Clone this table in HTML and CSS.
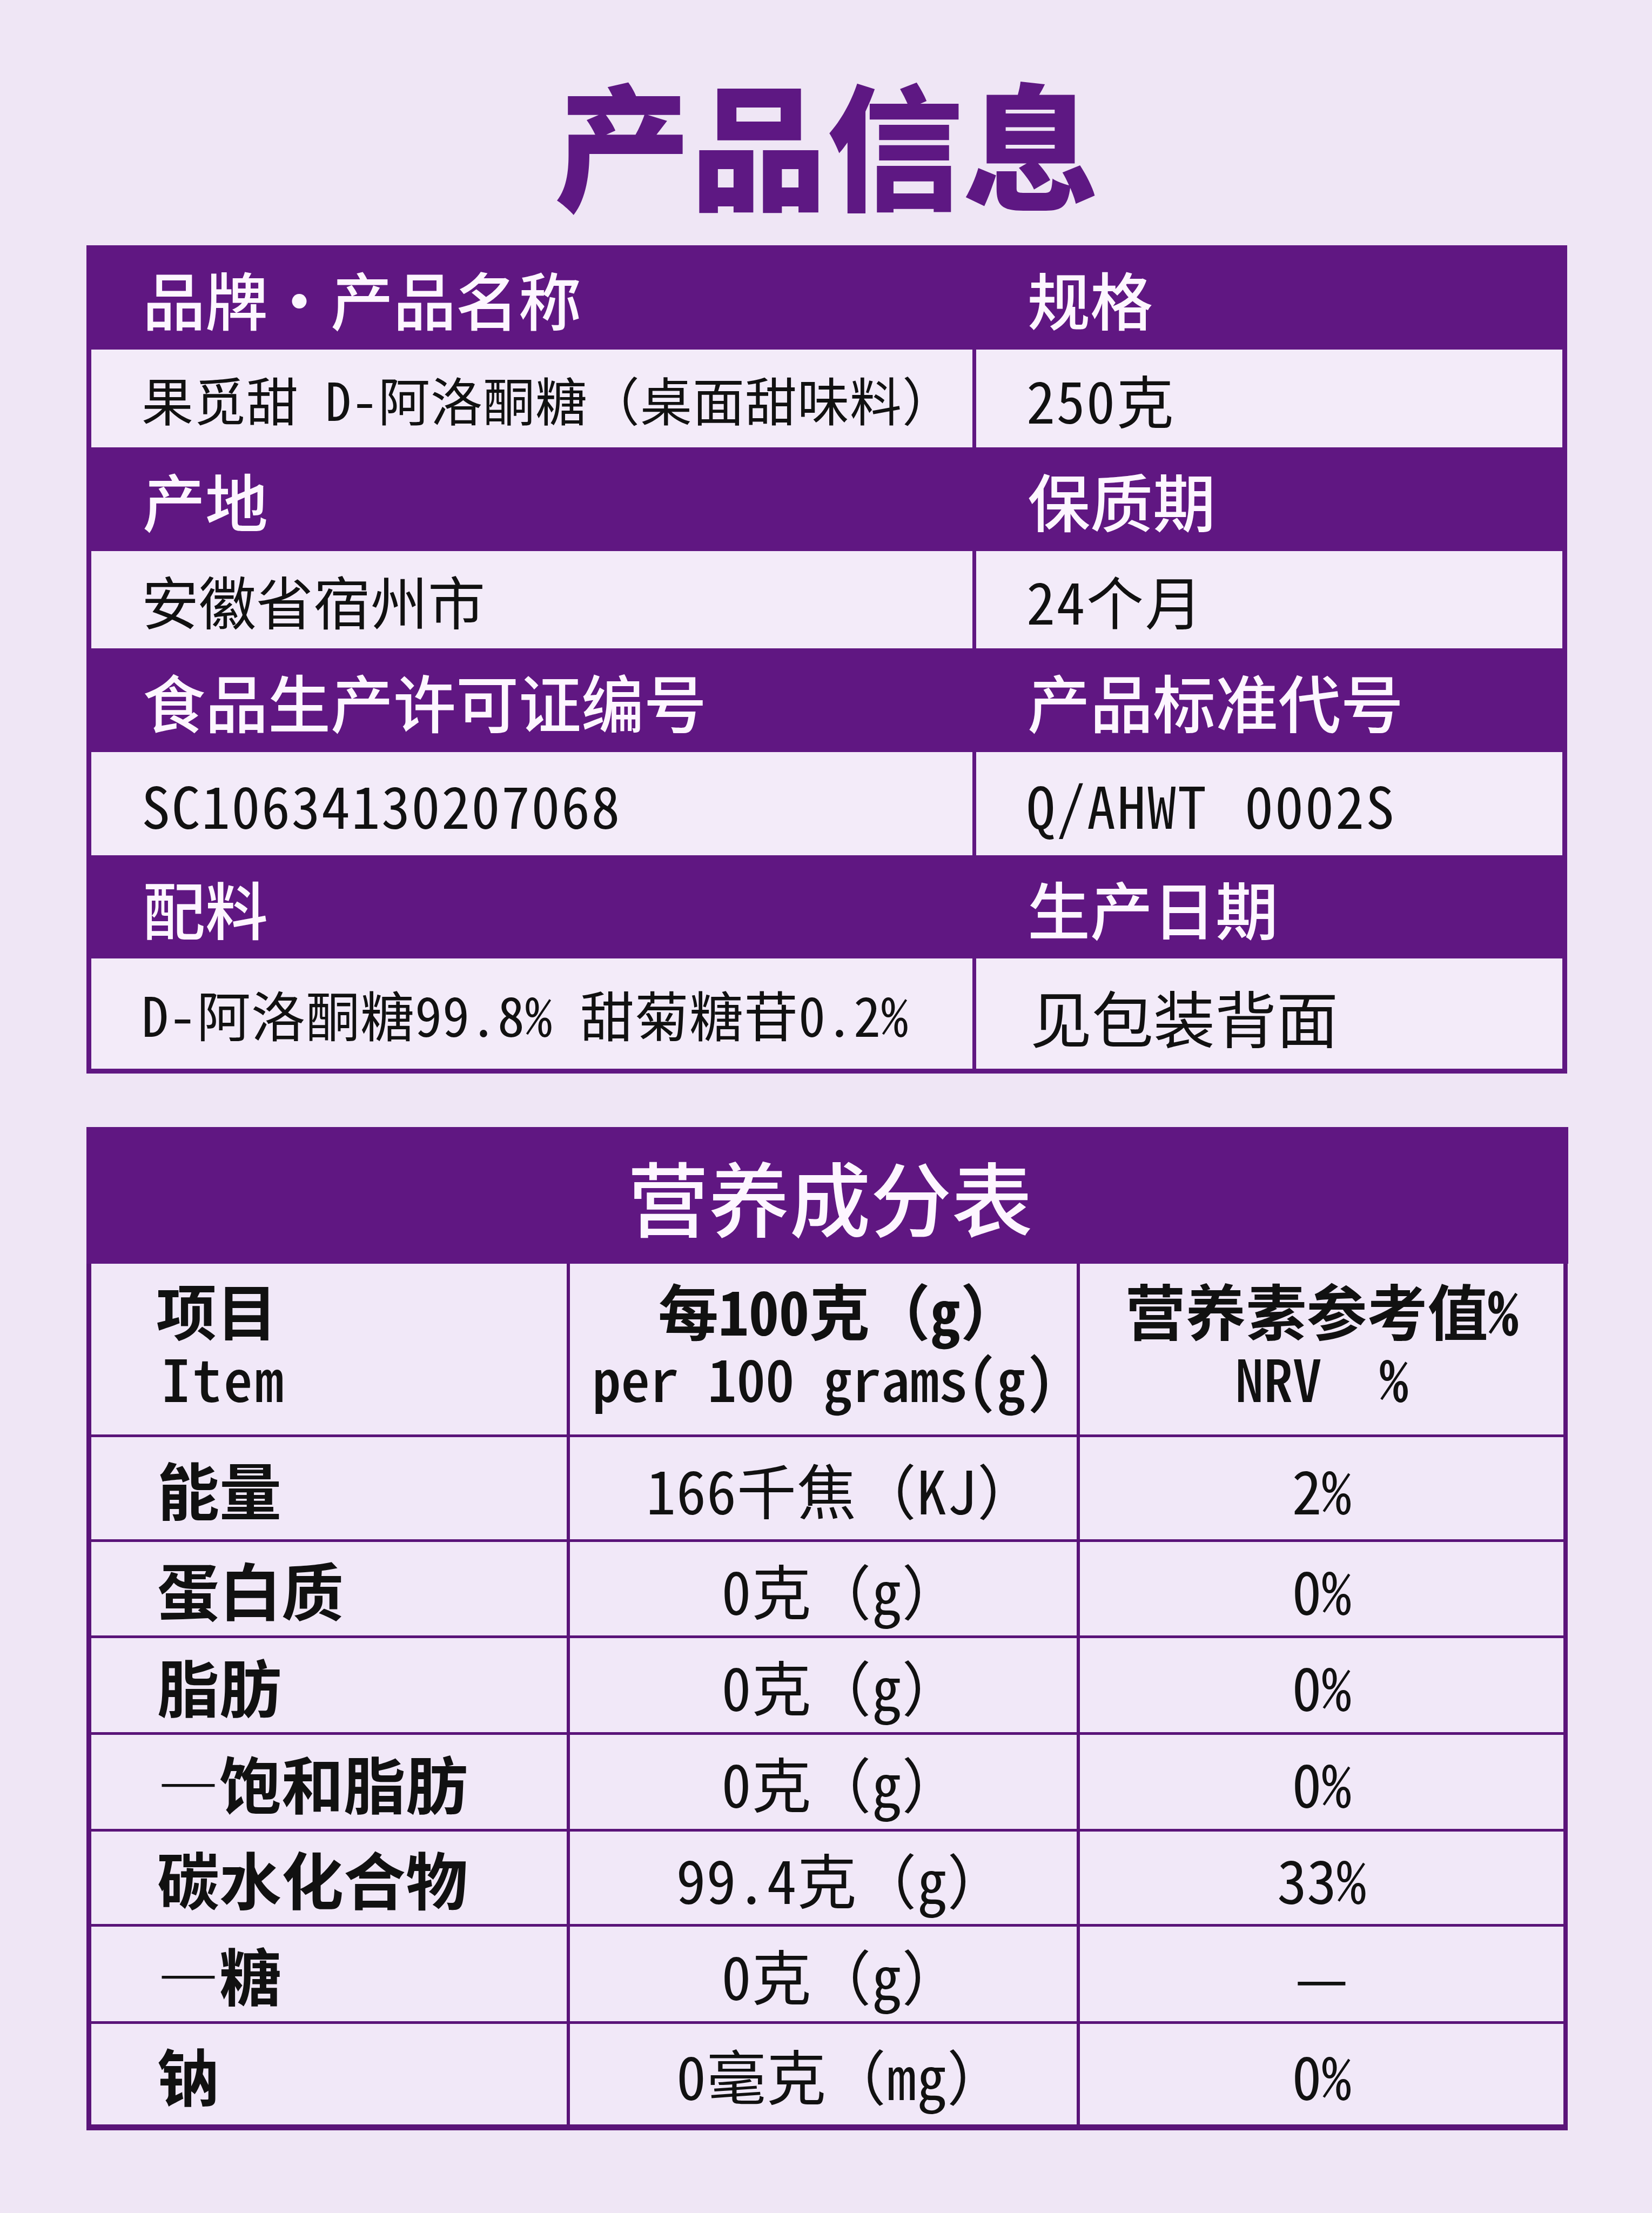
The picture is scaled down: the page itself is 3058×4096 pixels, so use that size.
FILE: index.html
```html
<!DOCTYPE html>
<html lang="zh-CN">
<head>
<meta charset="utf-8">
<title>产品信息</title>
<link rel="stylesheet" href="styles.css">
</head>
<body>
<main class="page">
  <h1 class="title">产品信息</h1>

  <section class="info">
    <div class="ih">品牌·产品名称</div>
    <div class="ih">规格</div>
    <div class="id small">果觅甜 D-阿洛酮糖<span class="fw">（</span>桌面甜味料<span class="fw">）</span></div>
    <div class="id num">250克</div>

    <div class="ih">产地</div>
    <div class="ih">保质期</div>
    <div class="id">安徽省宿州市</div>
    <div class="id num">24个月</div>

    <div class="ih">食品生产许可证编号</div>
    <div class="ih">产品标准代号</div>
    <div class="id num">SC10634130207068</div>
    <div class="id code">Q/AHWT 0002S</div>

    <div class="ih">配料</div>
    <div class="ih">生产日期</div>
    <div class="id mid">D-阿洛酮糖99.8% 甜菊糖苷0.2%</div>
    <div class="id big">见包装背面</div>
  </section>

  <section class="nut">
    <div class="nt">营养成分表</div>

    <div class="nc hd left"><span>项目</span><span class="en">Item</span></div>
    <div class="nc hd"><span class="shift">每100克<span class="fw">（</span>g<span class="fw">）</span></span><span class="en">per 100 grams(g)</span></div>
    <div class="nc hd"><span>营养素参考值%</span><span class="en">NRV  %</span></div>

    <div class="nc lab">能量</div>
    <div class="nc val amt">166千焦<span class="fw">（</span>KJ<span class="fw">）</span></div>
    <div class="nc val">2%</div>

    <div class="nc lab">蛋白质</div>
    <div class="nc val amt">0克<span class="fw">（</span>g<span class="fw">）</span></div>
    <div class="nc val">0%</div>

    <div class="nc lab">脂肪</div>
    <div class="nc val amt">0克<span class="fw">（</span>g<span class="fw">）</span></div>
    <div class="nc val">0%</div>

    <div class="nc lab">—饱和脂肪</div>
    <div class="nc val amt">0克<span class="fw">（</span>g<span class="fw">）</span></div>
    <div class="nc val">0%</div>

    <div class="nc lab">碳水化合物</div>
    <div class="nc val amt">99.4克<span class="fw">（</span>g<span class="fw">）</span></div>
    <div class="nc val">33%</div>

    <div class="nc lab">—糖</div>
    <div class="nc val amt">0克<span class="fw">（</span>g<span class="fw">）</span></div>
    <div class="nc val">—</div>

    <div class="nc lab">钠</div>
    <div class="nc val amt">0毫克<span class="fw">（</span>mg<span class="fw">）</span></div>
    <div class="nc val">0%</div>
  </section>
</main>
</body>
</html>
```

FILE: styles.css
```css
* { box-sizing: border-box; }

html, body {
  margin: 0;
  padding: 0;
  background: #efe6f5;
}

body {
  font-family: "Noto Sans CJK SC", "Noto Sans", sans-serif;
  font-feature-settings: "hwid" 1;
  color: #111111;
}

.fw { font-feature-settings: normal; }

.page {
  width: 3058px;
  min-height: 4096px;
  padding: 135px 0 0 160px;
}

.title {
  margin: 0 0 67px 0;
  width: 2741px;
  text-align: center;
  font-size: 252px;
  line-height: 252px;
  font-weight: 900;
  color: #5e1883;
}

/* ---------- info table ---------- */
.info {
  width: 2741px;
  display: grid;
  grid-template-columns: 1631px 1085px;
  grid-template-rows: 193px 181px 192px 180px 192px 191px 191px 204px;
  column-gap: 7px;
  padding: 0 9px 9px 9px;
  background: #601782;
}

.ih {
  display: flex;
  align-items: center;
  padding-left: 95px;
  font-size: 116px;
  font-weight: 500;
  color: #fdf6ff;
  line-height: 1;
  white-space: pre;
}

.id {
  display: flex;
  align-items: center;
  padding-left: 93px;
  background: #f3ebf9;
  font-size: 106px;
  font-weight: 400;
  line-height: 1;
  color: #111111;
  white-space: pre;
}

.id.num { letter-spacing: 2.5px; }
.id.code { letter-spacing: 3px; word-spacing: 12px; }
.id.small { font-size: 96px; letter-spacing: 1px; }
.id.mid { font-size: 100px; letter-spacing: 1px; }
.id.big { font-size: 114px; padding-top: 10px; padding-left: 100px; }

/* ---------- nutrition table ---------- */
.nut {
  margin-top: 99px;
  width: 2742px;
  display: grid;
  grid-template-columns: 880px 938px 895px;
  grid-template-rows: 248px 316px 189px 173px 174px 174px 171px 175px 186px;
  column-gap: 6px;
  row-gap: 5px;
  padding: 0 9px 11px 9px;
  background: #5a1479;
}

.nt {
  grid-column: 1 / -1;
  margin: 0 -9px -5px -9px;
  background: #601782;
  display: flex;
  align-items: center;
  justify-content: center;
  font-size: 150px;
  font-weight: 500;
  color: #fdf6ff;
  line-height: 1;
  padding-left: 10px;
}

.nc {
  background: #f1e8f8;
  display: flex;
  align-items: center;
  justify-content: center;
  line-height: 1;
  white-space: pre;
}

.nc.hd {
  flex-direction: column;
  font-size: 112px;
  font-weight: 700;
  line-height: 125px;
  padding-bottom: 22px;
}

.nc.hd .shift { padding-left: 60px; }

.nc.hd .en {
  font-weight: 500;
  font-size: 107px;
}

.nc.hd.left {
  align-items: flex-start;
  padding-left: 120px;
}

.nc.hd.left .en { padding-left: 10px; letter-spacing: 4px; }

.lab {
  justify-content: flex-start;
  padding-left: 122px;
  font-size: 115px;
  font-weight: 700;
}

.val {
  font-size: 110px;
  font-weight: 400;
}

.val.amt { padding-left: 68px; letter-spacing: 1px; }
```
